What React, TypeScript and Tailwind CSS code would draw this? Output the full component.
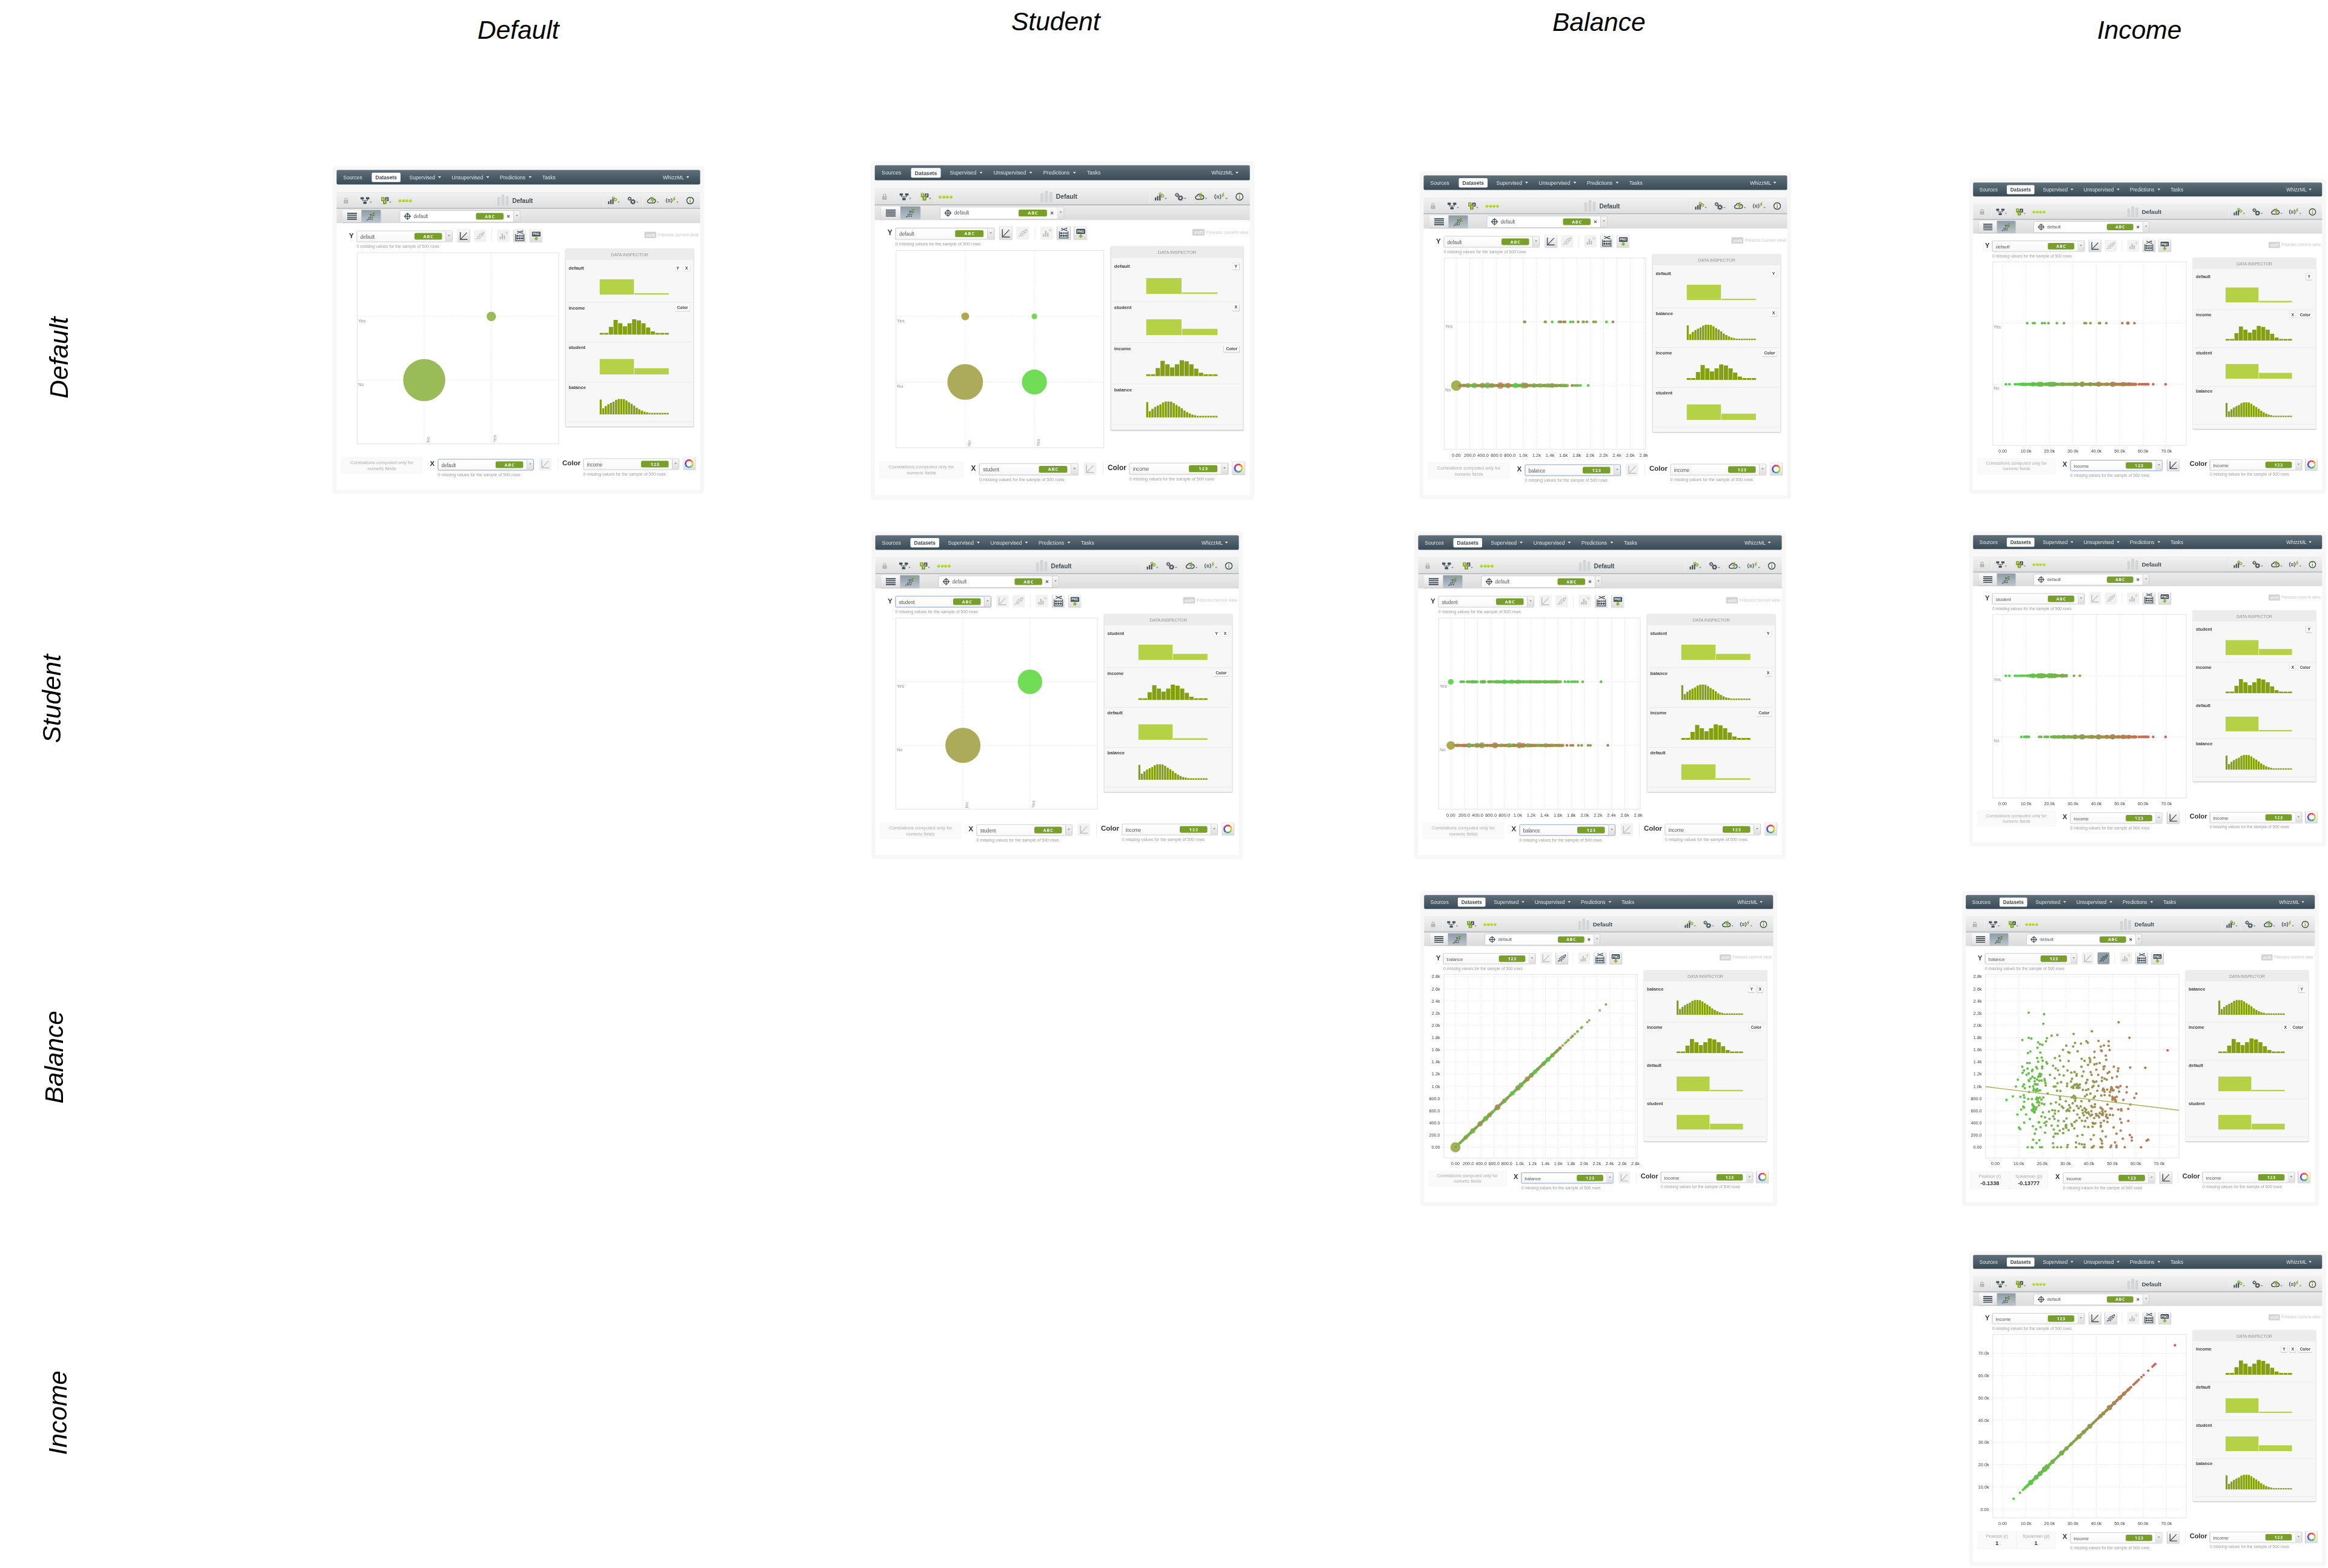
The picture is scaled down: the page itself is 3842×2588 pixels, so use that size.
import React from "react";

type Field = "default" | "student" | "balance" | "income";
type Dot = { x: number; y: number; r: number; c: string; o?: number };
type BtnState = "on" | "off" | "active";

/* ---------- helpers ---------- */

function rng(seed: number) {
  let s = seed;
  return () => {
    s = (s * 1664525 + 1013904223) % 4294967296;
    return s / 4294967296;
  };
}

function incomeColor(k: number) {
  const t = Math.max(0, Math.min(1, k / 73));
  const mix = (a: number, b: number) => Math.round(a + (b - a) * t);
  return `rgb(${mix(66, 226)},${mix(220, 88)},${mix(68, 86)})`;
}

const PLOT = { x: 68, y: 273, w: 665, h: 631 };
const YES = 483.6;
const NO = 693.6;
const incomeX = (k: number) => 101.6 + k * 8.05;
const balanceX = (v: number) => 107.7 + v * 0.221;
const balanceY = (v: number) => 867.3 - v * 0.2096;
const incomeY = (k: number) => 874.5 - k * 7.66;

const isNumeric = (f: Field) => f === "balance" || f === "income";

/* ---------- data ---------- */

function incomeRow(values: number[], y: number): Dot[] {
  return values.map((v) => ({ x: incomeX(v), y, r: 4.6, c: incomeColor(v) }));
}

function incomeDense(from: number, to: number, y: number, seed: number, bumps: number[][]): Dot[] {
  const rand = rng(seed);
  const out: Dot[] = [];
  for (let v = from; v <= to; v += 0.42) {
    out.push({ x: incomeX(v), y, r: 4.4 + rand() * 1.6, c: incomeColor(v) });
  }
  bumps.forEach(([v, r]) => out.push({ x: incomeX(v), y, r, c: incomeColor(v) }));
  return out;
}

function balanceDense(from: number, to: number, y: number, seed: number, inc: [number, number], bumps: number[][]): Dot[] {
  const rand = rng(seed);
  const out: Dot[] = [];
  for (let v = from; v <= to; v += 11) {
    out.push({ x: balanceX(v), y, r: 4 + rand() * 2, c: incomeColor(inc[0] + rand() * (inc[1] - inc[0])), o: 0.8 });
  }
  bumps.forEach(([v, r, k]) => out.push({ x: balanceX(v), y, r, c: incomeColor(k), o: 0.8 }));
  return out;
}

const balanceRow = (pairs: number[][], y: number): Dot[] =>
  pairs.map(([v, k]) => ({ x: balanceX(v), y, r: 4.5, c: incomeColor(k) }));

const LOW_TAIL = [1.4, 2.9, 5.3, 6.3];
const HIGH_TAIL = [58.2, 58.7, 59.4, 59.9, 60.4, 60.9, 61.3, 61.7, 62.2, 64.3, 69.6];

const dots: Record<string, Dot[]> = {
  dd: [
    { x: 289.3, y: NO, r: 69.5, c: "#99bb58" },
    { x: 510.6, y: YES, r: 15.5, c: "#99bb58" },
  ],
  ds: [
    { x: 289.3, y: YES, r: 12.5, c: "#b0a653" },
    { x: 510.6, y: YES, r: 9, c: "#70dc55" },
    { x: 289.3, y: NO, r: 57, c: "#abab5a" },
    { x: 510.6, y: NO, r: 40, c: "#71dc55" },
  ],
  ss: [
    { x: 510.6, y: YES, r: 40.5, c: "#71dc55" },
    { x: 289.3, y: NO, r: 58, c: "#abab5a" },
  ],
  db: [
    ...balanceRow([[1015, 15], [1026, 44], [1325, 20], [1335, 42], [1433, 8], [1532, 10], [1552, 62], [1562, 50], [1600, 35], [1625, 46], [1706, 10], [1745, 14], [1820, 52], [1892, 35], [1903, 22], [1950, 35], [2050, 40], [2082, 34], [2243, 10], [2340, 53]], YES),
    { x: 107.7, y: NO, r: 17.3, c: "#a1b254" },
    ...balanceDense(50, 1660, NO, 7, [2, 66], [[175, 8, 30], [270, 9, 22], [390, 9, 40], [465, 10, 18], [530, 8, 48], [660, 11, 52], [775, 9, 50], [885, 9, 6], [1000, 10, 24], [1040, 9, 42], [1160, 7.5, 32], [1260, 7, 12], [1370, 7, 22], [1430, 8, 36]]),
    ...balanceRow([[1730, 64], [1758, 10], [1790, 34], [1820, 14], [1855, 10], [1970, 12]], NO),
  ],
  di: [
    ...incomeRow([10.5, 13, 13.7, 16.9, 18, 19.6, 23.2, 26.2, 35, 35.6, 37.5, 41.2, 41.6, 44.3, 51.1, 56.3], YES),
    { x: incomeX(53.5), y: YES, r: 5.8, c: incomeColor(53.5) },
    ...incomeRow([...LOW_TAIL, 7.1, ...HIGH_TAIL], NO),
    ...incomeDense(7.6, 57, NO, 3, [[13, 7.4], [15.5, 8], [16.5, 8.4], [20, 8], [21, 8.4], [22, 8], [25.5, 6.8], [31, 7.4], [34, 9], [37.5, 7], [41, 8.6], [47, 8.8], [51.5, 7.4], [54, 6.6]]),
  ],
  sb: [
    { x: 107.7, y: YES, r: 9.2, c: "#5fdc4b" },
    ...balanceRow([[148, 8], [170, 12], [192, 10], [1706, 10], [1750, 9], [1760, 9], [1800, 14], [1830, 8], [1860, 14], [1892, 10], [1970, 14], [2243, 10]], YES),
    ...balanceDense(240, 400, YES, 21, [5, 24], []),
    ...balanceDense(450, 515, YES, 22, [5, 24], []),
    ...balanceDense(560, 1640, YES, 23, [3, 26], [[800, 7.5, 8], [900, 6.5, 6], [1000, 6.8, 15], [1090, 6, 5]]),
    { x: 107.7, y: NO, r: 14.2, c: "#b0a850" },
    ...balanceDense(60, 1680, NO, 24, [14, 68], [[270, 8, 28], [390, 8, 45], [465, 10, 36], [660, 10, 52], [875, 7.5, 26], [1025, 10, 42], [1080, 8, 56], [1150, 7, 26], [1420, 7, 36]]),
    ...balanceRow([[1735, 56], [1790, 40], [1822, 60], [1905, 36], [1955, 40], [2050, 40], [2085, 36], [2345, 53]], NO),
  ],
  si: [
    ...incomeRow([...LOW_TAIL, 7.3, 8, 8.6, 9.3, 30.5, 33], YES),
    ...incomeDense(10.4, 27.3, YES, 31, [[12, 6.4], [13, 8], [15.5, 8.6], [16.5, 9], [17.5, 8], [20, 8.4], [21, 8.6], [22.3, 8], [25.5, 7]]),
    ...incomeRow([8, 9.3, 10, 10.5, 11.2, 15.6, 16.5, 18, 18.8, 19.4, ...HIGH_TAIL], NO),
    ...incomeDense(20.8, 57, NO, 32, [[26.2, 7], [31, 8], [34, 9.2], [38, 7], [41, 8.8], [44.5, 7], [47, 9], [51.5, 7.6], [54, 7]]),
  ],
};

const bbDots: Dot[] = (() => {
  const rand = rng(11);
  const out: Dot[] = [{ x: balanceX(0), y: balanceY(0), r: 17.4, c: "#a1b254" }];
  const push = (v: number, r: number, k: number) => out.push({ x: balanceX(v), y: balanceY(v), r, c: incomeColor(k), o: 0.85 });
  push(5, 3.6, 60);
  push(40, 3.6, 14);
  for (let v = 60; v <= 1630; v += 9) push(v, 4 + rand() * 1.6, 4 + rand() * 48);
  [[160, 7.5, 36], [270, 9, 26], [385, 9, 44], [470, 9, 24], [530, 8, 40], [655, 10, 46], [760, 8, 26], [885, 8, 14], [975, 9.5, 34], [1020, 8.5, 20], [1120, 8.5, 40], [1180, 8, 40], [1240, 7.5, 8], [1370, 7, 26], [1440, 8, 12], [1510, 7, 26], [1630, 6, 44]].forEach(([v, r, k]) => push(v, r, k));
  [[1670, 54], [1705, 10], [1725, 50], [1750, 10], [1760, 30], [1795, 30], [1815, 40], [1825, 44], [1858, 14], [1895, 16], [1903, 26], [1955, 36], [1970, 20], [2052, 40], [2082, 34], [2245, 10], [2342, 53]].forEach(([v, k]) => push(v, 4.4, k));
  return out;
})();

const iiDots: Dot[] = (() => {
  const rand = rng(5);
  const out: Dot[] = [];
  const push = (k: number, r: number) => out.push({ x: incomeX(k), y: incomeY(k), r, c: incomeColor(k) });
  for (let k = 9.3; k <= 55; k += 0.3) push(k, 3.9 + rand() * 1.5);
  [[12, 9], [14.3, 8], [16, 8], [18, 9.5], [19, 9], [21.3, 7.5], [25.2, 8.5], [27.3, 7], [32.6, 8], [34.6, 7], [37.2, 8.5], [41.8, 6.8], [43, 6.5], [45.6, 9], [47.6, 7], [50, 7], [51.8, 6.6]].forEach(([k, r]) => push(k, r));
  [4.7, 7.4, 8.7, 55.9, 56.3, 56.8, 57.2, 57.7, 58.2, 59.3, 60.2, 62.2, 64, 64.6, 65.2, 73.6].forEach((k) => push(k, 4.4));
  return out;
})();

/* Balance against income, as [income (thousands), balance] pairs. */
const SCATTER: number[][] = (() => {
  const traced = [
    301,613,366,620,363,666,681,659,568,702,491,715,422,720,398,723,301,733,312,737,274,744,378,735,374,750,341,755,349,764,359,767,338,781,727,733,
    888,793,596,748,639,750,545,750,551,757,522,761,497,758,460,771,489,775,619,770,606,775,639,772,298,806,308,799,350,804,446,791,468,802,474,805,508,798,579,800,607,794,610,797,643,792,
    627,819,431,821,412,830,337,830,356,828,341,848,360,843,376,850,379,857,295,854,305,854,434,842,470,845,525,834,537,844,558,830,561,840,579,828,629,839,552,863,561,850,579,861,588,858,601,854,
    274,872,281,890,275,901,296,881,317,886,333,873,337,881,358,871,358,879,301,904,292,911,315,893,348,905,350,914,342,920,404,867,415,880,425,889,448,871,465,890,481,900,495,897,504,907,524,872,533,895,563,898,587,886,618,872,622,870,618,884,661,872,680,880,678,893,730,876,794,877,642,897,635,903,674,919,611,924,595,911,567,911,503,915,527,917,449,914,431,910,391,911,
    255,934,301,937,309,929,326,927,317,920,336,933,345,939,355,938,368,931,369,939,411,927,484,930,480,943,549,935,610,940,622,929,631,934,654,925,423,951,438,946,464,953,495,958,517,957,545,947,573,941,578,946,587,943,543,951,
    247,967,276,966,281,957,285,975,305,968,320,966,327,955,338,957,372,950,373,962,407,967,415,967,349,985,333,983,321,986,303,993,421,987,435,988,463,965,483,970,489,966,504,973,512,960,516,972,530,983,544,984,553,980,562,1001,575,964,570,970,596,964,591,987,616,977,633,982,651,970,654,977,660,985,645,993,672,969,689,965,680,972,716,969,715,995,683,991,756,1001,748,1021,701,1031,731,1053,722,1074,
    207,1031,234,1014,266,1016,280,1008,283,1020,282,1040,299,1027,315,1027,336,1020,348,1020,363,1019,381,1000,433,1015,434,1028,395,1049,367,1052,357,1048,344,1057,317,1052,322,1060,278,1063,281,1068,269,1077,253,1101,290,1101,340,1036,355,1030,416,1043,431,1053,442,1063,447,1070,458,1037,483,1019,492,1011,499,1025,497,1036,487,1047,524,1037,539,1014,547,1006,557,1036,576,1022,581,1014,608,1010,622,1008,655,1016,673,1016,667,1030,669,1040,655,1031,643,1010,
    306,1123,282,1140,260,1164,265,1171,319,1157,345,1138,343,1139,332,1172,327,1193,351,1162,374,1153,355,1110,370,1115,389,1122,405,1110,410,1122,426,1131,376,1135,368,1141,398,1154,424,1155,450,1133,461,1120,458,1153,458,1160,470,1176,482,1147,485,1155,495,1137,503,1130,494,1168,447,1170,432,1178,407,1173,413,1193,423,1193,447,1190,370,1188,320,1222,346,1224,334,1238,406,1208,404,1239,466,1247,507,1204,528,1199,501,1235,515,1241,526,1244,537,1245,576,1200,564,1220,613,1181,605,1219,610,1227,627,1207,611,1240,
    537,1159,553,1161,571,1160,573,1144,583,1143,606,1141,606,1160,619,1131,634,1137,635,1118,628,1109,614,1104,599,1114,587,1106,578,1118,569,1102,548,1117,540,1132,526,1131,516,1117,507,1101,530,1094,553,1091,566,1085,601,1094,625,1086,652,1073,644,1103,657,1104,660,1163,688,1123,693,1140,690,1178,722,1132,672,1193,729,1199,737,1211,737,1226,699,1217,666,1235,672,1250,800,1226,806,1222,
    297,1258,314,1258,317,1259,349,1258,357,1258,406,1258,422,1258,438,1258,464,1258,501,1258,534,1258,537,1258,568,1259,572,1258,576,1252,604,1258,609,1258,612,1258,647,1258,672,1258,707,1258,776,1258,650,1250,
    680,1077,692,1075,693,1082,669,1038,634,1053,605,1068,609,1072,614,1077,581,1052,570,1066,544,1078,537,1071,521,1062,512,1071,492,1082,476,1068,469,1082,462,1082,401,1080,412,1082,427,1085,412,1097,387,1087,361,1091,326,1082,331,1076,321,1072,317,1083,323,1090,472,1056,
    318,1058,324,1066,318,1077,334,1066,346,1044,341,1024,333,1028,337,1043,314,1080,326,1091,303,941,326,942,333,957,350,918,346,911,354,909,337,978,341,988,331,989,323,978,
    498,960,508,965,504,955,490,974,511,974,497,1016,493,1022,488,1018,505,1060,540,1087,534,1105,546,1093,528,1080,556,1098,562,1107,586,1098,594,1106,609,1100,615,1095,612,1086,632,1116,566,1060,580,1065,630,1101,461,1084,473,1084,467,1077,572,1141,578,1145,460,1151,460,1165,606,1155,
    650,975,649,983,655,985,665,1020,660,1026,668,1034,656,1024,678,970,619,983,622,992,614,985,647,1072,
  ];
  const out: number[][] = [];
  for (let i = 0; i < traced.length; i += 2) {
    out.push([(traced[i] - 160) / 9.9, ((1258 - traced[i + 1]) / 58.45) * 200]);
  }
  return out;
})();

const biDots: Dot[] = SCATTER.map(([k, v]) => ({ x: incomeX(k), y: balanceY(v), r: 4.3, c: incomeColor(k) }));
dots.bb = bbDots;
dots.ii = iiDots;
dots.bi = biDots;

/* ---------- small pieces ---------- */

function Caret({ className = "" }: { className?: string }) {
  return (
    <svg viewBox="0 0 10 6" className={className}>
      <path d="M0 0h10L5 6z" fill="currentColor" />
    </svg>
  );
}

function Badge({ numeric }: { numeric: boolean }) {
  return (
    <div className="flex h-[22px] w-[91px] shrink-0 items-center justify-center rounded-[5px] bg-[#77a02b] pl-[2px] font-['Open_Sans',sans-serif] text-[14px] leading-none font-bold tracking-[2px] text-white">
      {numeric ? "123" : "ABC"}
    </div>
  );
}

function FieldSelect({ field, focused = false }: { field: Field; focused?: boolean }) {
  return (
    <div
      className={
        "flex h-[38px] w-[317px] items-center rounded-[4px] border-2 bg-gradient-to-b from-white to-[#f8f8f8] shadow-[0_1px_2px_rgba(0,0,0,0.12)] " +
        (focused ? "border-[#86a3dc]" : "border-[#cfcfcf]")
      }
    >
      <span className="flex-1 pt-[3px] pl-[10px] text-[16.5px] leading-none tracking-[-0.3px] text-[#5c5c5c]">{field}</span>
      <Badge numeric={isNumeric(field)} />
      <div className="ml-[11px] flex h-full w-[22px] items-center justify-center rounded-r-[3px] border-l-2 border-[#cfcfcf] bg-gradient-to-b from-[#f7f7f7] to-[#dedede]">
        <Caret className="mb-1 h-[6px] w-[8px] text-[#888]" />
      </div>
    </div>
  );
}

function ToolButton({ state, children }: { state: BtnState; children: React.ReactNode }) {
  const look =
    state === "active"
      ? "border-[#8b959c] bg-[#94a0a8]"
      : state === "off"
        ? "border-[#ececec] bg-[#f1f1f1] opacity-90"
        : "border-[#dcdcdc] bg-gradient-to-b from-[#fafafa] to-[#dcdcdc] shadow-[0_1px_2px_rgba(0,0,0,0.3)]";
  return (
    <div className={"flex h-[41px] w-[41px] shrink-0 items-center justify-center rounded-[4px] border " + look}>
      <div className={"h-full w-full " + (state === "off" ? "opacity-35 grayscale-[40%]" : "")}>{children}</div>
    </div>
  );
}

function LineIcon() {
  return (
    <svg viewBox="0 0 40 40" className="h-full w-full" fill="none" stroke="#3e4c55">
      <path d="M8.5 7v25.5H33" strokeWidth="3" />
      <path d="M11 30L31 9" strokeWidth="2.6" />
    </svg>
  );
}

function ScatterIcon() {
  const p = [[8, 30], [13, 28], [12, 22], [19, 29], [18, 23], [17, 17], [24, 23], [26, 17], [21, 14], [30, 18], [27, 11], [33, 12], [32, 8]];
  return (
    <svg viewBox="0 0 40 40" className="h-full w-full">
      {p.map(([x, y], i) => (
        <circle key={i} cx={x} cy={y} r="2.1" fill="#3e4c55" />
      ))}
      <path d="M11 29L31 10" stroke="#3e4c55" strokeWidth="1.4" />
    </svg>
  );
}

function BarsPlusIcon() {
  return (
    <svg viewBox="0 0 40 40" className="h-full w-full">
      <g fill="#3e4c55">
        <rect x="7" y="22" width="4.5" height="10" rx="2" />
        <rect x="14" y="12" width="4.5" height="20" rx="2" />
        <rect x="21" y="18" width="4.5" height="14" rx="2" />
      </g>
      <path d="M31 5v11M25.500 10.500h11" stroke="#9bbf2f" strokeWidth="3.6" />
    </svg>
  );
}

function AbacusIcon() {
  return (
    <svg viewBox="0 0 40 40" className="h-full w-full" fill="none" stroke="#3e4c55">
      <path d="M11 4c8 0 9 7 18 7M11 11c8 0 9-7 18-7" strokeWidth="2.400" />
      <path d="M28 1.500l5 2.500-5 2.500zM28 8.500l5 2.500-5 2.500z" fill="#3e4c55" stroke="none" />
      <path d="M6 14v22h28V14" strokeWidth="2.600" />
      <path d="M6 20h28M6 28h28" strokeWidth="1.500" />
      <g fill="#3e4c55" stroke="none">
        <circle cx="12" cy="20" r="3.200" />
        <circle cx="12" cy="28.500" r="3.200" />
        <circle cx="20" cy="28.500" r="3.200" />
        <circle cx="28" cy="28.500" r="3.200" />
      </g>
      <circle cx="20" cy="20" r="2.600" strokeWidth="1.600" />
      <circle cx="28" cy="20" r="2.600" strokeWidth="1.600" />
    </svg>
  );
}

function PngIcon() {
  return (
    <svg viewBox="0 0 40 40" className="h-full w-full">
      <rect x="6" y="6" width="29" height="16" rx="2" fill="#3e4c55" />
      <text x="20.500" y="18" textAnchor="middle" fontSize="11" fontWeight="700" fill="#fff" fontFamily="Liberation Sans, sans-serif">
        PNG
      </text>
      <path d="M17.500 23h6v5h5l-8 8-8-8h5z" fill="#8ab52a" />
    </svg>
  );
}

function Wheel() {
  const colors = ["#e8452c", "#f08c1e", "#f2c51c", "#9ccb3b", "#3fae6a", "#2f9fd0", "#3b5fc0", "#6a3fae", "#a93a96", "#d93672"];
  const pt = (a: number) => [20 + 12 * Math.sin(a), 20 - 12 * Math.cos(a)];
  return (
    <svg viewBox="0 0 40 40" className="h-full w-full">
      <circle cx="20" cy="20" r="15" fill="#fff" />
      {colors.map((c, i) => {
        const a = pt((i / 10) * Math.PI * 2);
        const b = pt(((i + 1) / 10) * Math.PI * 2);
        return <path key={c} d={`M${a[0]} ${a[1]}A12 12 0 0 1 ${b[0]} ${b[1]}`} fill="none" stroke={c} strokeWidth="5.5" />;
      })}
    </svg>
  );
}

/* ---------- header icons ---------- */

function LockIcon() {
  return (
    <svg viewBox="0 0 16 20" className="h-[20px] w-[16px]">
      <path d="M4 9V5.500a4 4 0 0 1 8 0V9" fill="none" stroke="#b3b3b3" strokeWidth="2.400" />
      <rect x="1" y="8.500" width="14" height="11" rx="1" fill="#b3b3b3" />
      <rect x="7" y="12" width="2" height="4" fill="#e6e6e6" />
    </svg>
  );
}

function FlowIcon() {
  return (
    <svg viewBox="0 0 30 24" className="h-[24px] w-[30px]">
      <g fill="#44515a">
        <rect x="0" y="1" width="11" height="7" rx="1" />
        <rect x="18" y="1" width="11" height="7" rx="1" />
        <rect x="9" y="16" width="11" height="7" rx="1" />
      </g>
      <path d="M6 8v4h17V8M14.500 12v4" fill="none" stroke="#44515a" strokeWidth="2" />
    </svg>
  );
}

function BlocksIcon() {
  return (
    <svg viewBox="0 0 26 26" className="h-[26px] w-[26px]">
      <rect x="0" y="1" width="11" height="14" rx="2" fill="#8aa82c" />
      <rect x="13" y="2" width="12" height="13" rx="2" fill="#44515a" />
      <rect x="6" y="10" width="12" height="15" rx="2" fill="#7f9f28" />
      <g fontFamily="Liberation Sans, sans-serif" fontSize="9" fontWeight="700" fill="#fff">
        <text x="3" y="10">1</text>
        <text x="16.500" y="12">0</text>
        <text x="9.500" y="21">1</text>
      </g>
    </svg>
  );
}

function Gear({ cx, cy, r, color }: { cx: number; cy: number; r: number; color: string }) {
  return (
    <g stroke={color} fill="none">
      <circle cx={cx} cy={cy} r={r * 0.62} strokeWidth={r * 0.42} />
      <circle cx={cx} cy={cy} r={r * 0.92} strokeWidth={r * 0.26} strokeDasharray={`${r * 0.36} ${r * 0.3625}`} />
    </g>
  );
}

function ModelIcon() {
  return (
    <svg viewBox="0 0 32 30" className="h-[30px] w-[32px]">
      <g fill="#44515a">
        <rect x="1" y="17" width="4.500" height="10" rx="1.500" />
        <rect x="8" y="12" width="4.500" height="15" rx="1.500" />
        <rect x="15" y="8" width="4.500" height="19" rx="1.500" />
      </g>
      <Gear cx={18} cy={6} r={5} color="#84a82c" />
      <Gear cx={25} cy={12} r={6} color="#84a82c" />
    </svg>
  );
}

function GearsIcon() {
  return (
    <svg viewBox="0 0 30 28" className="h-[28px] w-[30px]">
      <Gear cx={8} cy={8} r={6.5} color="#44515a" />
      <Gear cx={19} cy={18} r={8.5} color="#44515a" />
    </svg>
  );
}

function CloudIcon() {
  return (
    <svg viewBox="0 0 32 26" className="h-[26px] w-[32px]">
      <path d="M8 21a5.500 5.500 0 0 1-.5-11C9 4 17 2 21 8c5-.5 8 3 7.500 7S25 21 22 21z" fill="none" stroke="#44515a" strokeWidth="3.200" />
      <path d="M19 0l-8 13h6l-3 12 11-14h-7l5-11z" fill="#8db52a" />
    </svg>
  );
}

function ScriptIcon() {
  return (
    <svg viewBox="0 0 36 26" className="h-[26px] w-[36px]">
      <g fill="none" stroke="#44515a" strokeWidth="2.400">
        <path d="M6 5c-4 5-4 11 0 16M19 5c4 5 4 11 0 16" />
        <path d="M8 10h9M8 13.500h9M8 17h9" strokeWidth="1.800" />
      </g>
      <path d="M30 0l-6 9h4l-2 8 8-10h-4l3-7z" fill="#8db52a" />
    </svg>
  );
}

function InfoIcon() {
  return (
    <svg viewBox="0 0 26 26" className="h-[26px] w-[26px]">
      <circle cx="13" cy="13" r="11" fill="#f2f2f2" stroke="#3e4c55" strokeWidth="3" />
      <path d="M13 5.500v3.500M13 11v9" stroke="#84a82c" strokeWidth="3.600" />
    </svg>
  );
}

function Divider({ className = "" }: { className?: string }) {
  return <div className={"h-[34px] w-[2px] shrink-0 border-l border-[#d2d2d2] bg-white " + className} />;
}

function IconMenu({ width, children }: { width: string; children: React.ReactNode }) {
  return (
    <div className={"flex items-center " + width}>
      {children}
      <Caret className="mt-3 h-[5px] w-[8px] text-[#7c858b]" />
    </div>
  );
}

/* ---------- panel sections ---------- */

function NavItem({ label, width, menu = true }: { label: string; width: string; menu?: boolean }) {
  return (
    <div className={"flex shrink-0 items-center justify-between " + width}>
      <span>{label}</span>
      {menu && <Caret className="h-[6px] w-[10px] text-[#e6eaec]" />}
    </div>
  );
}

function NavBar() {
  return (
    <div className="flex h-[48px] items-center rounded-[5px] bg-gradient-to-b from-[#60707a] to-[#384b57] pl-[22px] text-[17px] leading-none text-[#dfe4e7]">
      <NavItem label="Sources" width="w-[65px]" menu={false} />
      <div className="ml-[29px] flex h-[31px] w-[95px] items-center justify-center rounded-[4px] bg-white pt-[2px] text-[17px] font-bold text-[#3c464c]">
        Datasets
      </div>
      <div className="ml-[29px] flex gap-[35px]">
        <NavItem label="Supervised" width="w-[105px]" />
        <NavItem label="Unsupervised" width="w-[124px]" />
        <NavItem label="Predictions" width="w-[105px]" />
        <NavItem label="Tasks" width="w-[45px]" menu={false} />
      </div>
      <div className="mr-[36px] ml-auto">
        <NavItem label="WhizzML" width="w-[87px]" />
      </div>
    </div>
  );
}

function HeaderBar() {
  return (
    <div className="mt-[26px] flex h-[54px] items-center border-t border-b-2 border-t-[#dcdcdc] border-b-[#6f7a81] bg-gradient-to-b from-[#f1f1f1] to-[#dfdfdf]">
      <div className="flex w-[530px] items-center pl-[23px]">
        <LockIcon />
        <Divider className="ml-[22px]" />
        <div className="ml-[16px]">
          <IconMenu width="w-[41px]"><FlowIcon /></IconMenu>
        </div>
        <Divider className="ml-[7px]" />
        <div className="ml-[18px]">
          <IconMenu width="w-[38px]"><BlocksIcon /></IconMenu>
        </div>
        <Divider className="ml-[6px]" />
        <div className="ml-[11px] flex gap-[1.5px]">
          {[0, 1, 2, 3].map((i) => (
            <div key={i} className="h-[10px] w-[10px] rounded-full bg-gradient-to-b from-[#d6f04a] to-[#8cc80c]" />
          ))}
        </div>
      </div>
      <svg viewBox="0 0 40 40" className="h-[40px] w-[40px]" fill="#d3d5d6">
        <rect x="0" y="8" width="10" height="31" rx="4" />
        <rect x="14" y="0" width="10" height="39" rx="4" />
        <rect x="28" y="5" width="10" height="34" rx="4" />
      </svg>
      <span className="pl-[10px] text-[20px] leading-none font-bold text-[#3d4a52]">Default</span>
      <div className="ml-auto flex items-center pr-[20px]">
        <Divider />
        <div className="ml-[15px]"><IconMenu width="w-[41px]"><ModelIcon /></IconMenu></div>
        <Divider className="ml-[7px]" />
        <div className="ml-[14px]"><IconMenu width="w-[42px]"><GearsIcon /></IconMenu></div>
        <Divider className="ml-[7px]" />
        <div className="ml-[14px]"><IconMenu width="w-[41px]"><CloudIcon /></IconMenu></div>
        <Divider className="ml-[6px]" />
        <div className="ml-[12px]"><IconMenu width="w-[45px]"><ScriptIcon /></IconMenu></div>
        <Divider className="ml-[7px]" />
        <div className="ml-[15px]"><InfoIcon /></div>
      </div>
    </div>
  );
}

function ViewBar() {
  return (
    <div className="flex h-[48px] items-center bg-gradient-to-b from-[#ebebeb] to-[#dcdcdc] pt-[1px] pl-[20px]">
      <div className="flex h-[41px] shadow-[0_1px_2px_rgba(0,0,0,0.2)]">
        <div className="flex w-[62px] items-center justify-center rounded-l-[3px] bg-gradient-to-b from-[#fbfbfb] to-[#dedede]">
          <svg viewBox="0 0 32 24" className="h-[24px] w-[32px]" stroke="#3e4c55" strokeWidth="3.600">
            <path d="M0 2.500h32M0 8.800h32M0 15.200h32M0 21.500h32" />
          </svg>
        </div>
        <div className="flex w-[64px] items-center justify-center rounded-r-[3px] bg-gradient-to-b from-[#8e9ba5] to-[#bac4cb]">
          <svg viewBox="0 0 32 30" className="h-[30px] w-[32px]">
            <g fill="#44515a">
              {[[3, 27], [8, 25], [9, 20], [13, 25], [14, 19], [15, 14], [19, 25], [20, 19], [19, 10], [24, 13], [14, 9], [25, 5]].map(([x, y], i) => (
                <circle key={i} cx={x} cy={y} r="2" />
              ))}
            </g>
            <path d="M15 16L30 3M20 3l9 10" stroke="#84a82c" strokeWidth="2.400" />
          </svg>
        </div>
      </div>
      <div className="ml-[62px] flex h-[40px] w-[398px] items-center rounded-[4px] border-2 border-[#cbcbcb] bg-white">
        <svg viewBox="0 0 24 24" className="ml-[12px] h-[24px] w-[24px]" fill="none" stroke="#3e4c55" strokeWidth="2.600">
          <circle cx="12" cy="12" r="8" />
          <path d="M12 0v24M0 12h24" />
        </svg>
        <span className="flex-1 pl-[8px] text-[16.5px] leading-none tracking-[-0.3px] text-[#5c5c5c]">default</span>
        <Badge numeric={false} />
        <svg viewBox="0 0 10 10" className="ml-[11px] h-[10px] w-[10px]" stroke="#666" strokeWidth="2.800">
          <path d="M1 1l8 8M9 1L1 9" />
        </svg>
        <div className="ml-[11px] flex h-full w-[21px] items-center justify-center rounded-r-[3px] border-l-2 border-[#cfcfcf] bg-gradient-to-b from-[#f7f7f7] to-[#dedede]">
          <Caret className="mb-1 h-[6px] w-[8px] text-[#888]" />
        </div>
      </div>
    </div>
  );
}

function MissingNote() {
  return (
    <div className="mt-[4px] text-[14.5px] leading-[20px] tracking-[-0.22px] whitespace-nowrap text-[#a0a0a0]">
      0 missing values for the sample of 500 rows
    </div>
  );
}

function Toolbar({ spec }: { spec: PanelSpec }) {
  return (
    <div className="flex h-[82px] items-start pt-[21px] pl-[41px]">
      <span className="w-[25px] pt-[6px] text-[23px] leading-[26px] font-bold text-[#333]">Y</span>
      <div className="w-[317px] pt-[3px]">
        <FieldSelect field={spec.y} focused={spec.yFocus} />
        <MissingNote />
      </div>
      <div className="ml-[16px] flex items-center gap-[13px]">
        <ToolButton state={spec.yLine}><LineIcon /></ToolButton>
        <ToolButton state={spec.yScatter}><ScatterIcon /></ToolButton>
        <div className="mx-[4px] h-[41px] w-[2px] bg-[#ececec]" />
        <ToolButton state="off"><BarsPlusIcon /></ToolButton>
        <ToolButton state="on"><AbacusIcon /></ToolButton>
        <ToolButton state="on"><PngIcon /></ToolButton>
      </div>
      <div className="mr-[5px] ml-auto flex items-center pt-[7px]">
        <div className="flex h-[21px] w-[39px] items-center justify-center rounded-[2px] bg-[#d3d3d3] text-[14px] leading-none font-bold text-[#f3f3f3]">shift</div>
        <span className="ml-[5px] text-[14.500px] leading-none text-[#cacaca]">Freezes current view</span>
      </div>
    </div>
  );
}

type Tick = { at: number; label: string };

const balanceTicks = Array.from({ length: 15 }, (_, i) => ({
  v: i * 200,
  label: i === 0 ? "0.00" : i < 5 ? `${i * 200}.0` : `${(i * 0.2).toFixed(1)}k`,
}));
const incomeTicks = Array.from({ length: 8 }, (_, i) => ({ v: i * 10, label: i === 0 ? "0.00" : `${i * 10}.0k` }));

function Plot({ spec }: { spec: PanelSpec }) {
  const xs: Tick[] =
    spec.x === "balance"
      ? balanceTicks.map((t) => ({ at: balanceX(t.v), label: t.label }))
      : spec.x === "income"
        ? incomeTicks.map((t) => ({ at: incomeX(t.v), label: t.label }))
        : [{ at: 289.3, label: "No" }, { at: 510.6, label: "Yes" }];
  const ys: Tick[] =
    spec.y === "balance"
      ? balanceTicks.map((t) => ({ at: balanceY(t.v), label: t.label }))
      : spec.y === "income"
        ? incomeTicks.map((t) => ({ at: incomeY(t.v), label: t.label }))
        : [{ at: NO, label: "No" }, { at: YES, label: "Yes" }];
  const marks = dots[spec.y[0] + spec.x[0]];
  const right = PLOT.x + PLOT.w;
  const bottom = PLOT.y + PLOT.h;
  return (
    <svg viewBox="0 258 756 689" className="h-[689px] w-[756px] shrink-0" fontFamily="Liberation Sans, sans-serif">
      <rect x={PLOT.x} y={PLOT.y} width={PLOT.w} height={PLOT.h} fill="#fff" stroke="#e4e4e4" strokeWidth="2.200" />
      <g stroke="#dedede" strokeWidth="1.500" strokeDasharray="4 4">
        {xs.map((t) => (
          <line key={t.label} x1={t.at} x2={t.at} y1={PLOT.y} y2={bottom} />
        ))}
        {ys.map((t) => (
          <line key={t.label} x1={PLOT.x} x2={right} y1={t.at} y2={t.at} />
        ))}
      </g>
      {marks.map((d, i) => (
        <circle key={i} cx={d.x} cy={d.y} r={d.r} fill={d.c} fillOpacity={d.o ?? 1} />
      ))}
      {spec.trend && <line x1={PLOT.x} y1="659" x2={right} y2="740" stroke="#a0b34c" strokeWidth="3" />}
      {isNumeric(spec.x)
        ? xs.map((t) => (
            <text key={t.label} x={t.at} y="929" textAnchor="middle" fontSize="15.2" fill="#3f3f3f">
              {t.label}
            </text>
          ))
        : xs.map((t) => (
            <text key={t.label} transform={`translate(${t.at + 17} 900) rotate(-90)`} fontSize="15" fill="#929292">
              {t.label}
            </text>
          ))}
      {isNumeric(spec.y)
        ? ys.map((t) => (
            <text key={t.label} x="55" y={t.at + 5.5} textAnchor="end" fontSize="15.2" fill="#3f3f3f">
              {t.label}
            </text>
          ))
        : ys.map((t) => (
            <text key={t.label} x="71" y={t.at + 18.5} fontSize="15" fill="#929292">
              {t.label}
            </text>
          ))}
    </svg>
  );
}

const HIST: Record<Field, { values: number[]; color: string; gap: number }> = {
  default: { values: [51, 5], color: "#b5d247", gap: 1.5 },
  student: { values: [51, 20.5], color: "#b5d247", gap: 1.5 },
  income: { values: [6, 6, 26, 49, 38, 28, 38, 51, 47.5, 38, 24, 11, 6, 6, 6], color: "#84a010", gap: 1.4 },
  balance: {
    values: [49, 20, 27.5, 33.5, 38, 42, 48, 51, 51, 50.5, 46, 40, 35, 29, 22, 17, 12.5, 9, 7, 5, 5, 5, 5, 5, 5, 5, 5],
    color: "#84a010",
    gap: 1.6,
  },
};

function Histogram({ field }: { field: Field }) {
  const h = HIST[field];
  const step = 230 / h.values.length;
  return (
    <svg viewBox="0 0 230 52" className="ml-[103px] h-[52px] w-[230px]">
      {h.values.map((v, i) => (
        <rect key={i} x={i * step} y={52 - v} width={step - h.gap} height={v} fill={h.color} />
      ))}
    </svg>
  );
}

function Inspector({ rows }: { rows: InspectorRow[] }) {
  return (
    <div className="mt-[1px] h-[588px] w-[422px] rounded-[3px] bg-[#f7f7f7] shadow-[0_2px_4px_rgba(0,0,0,0.25)]">
      <div className="flex h-[38px] items-center justify-center bg-[#ececec] pt-[1px] text-[15px] leading-none tracking-[-0.4px] text-[#959595]">
        DATA INSPECTOR
      </div>
      <div className="px-[5px] pt-[9px]">
        {rows.map(([field, tags]) => (
          <div key={field} className="h-[131.500px] border-b-2 border-[#eaeaea] px-[5px] pt-[5px]">
            <div className="flex h-[24px] items-center justify-between">
              <span className="text-[15.500px] leading-none font-bold tracking-[-0.1px] text-[#444]">{field}</span>
              <div className="flex gap-[8px] pr-[2px]">
                {tags.map((t) => (
                  <span key={t} className="rounded-[3px] bg-white px-[6px] py-[3px] text-[14px] leading-[15px] font-bold text-[#444] shadow-[0_1px_2px_rgba(0,0,0,0.16)]">
                    {t}
                  </span>
                ))}
              </div>
            </div>
            <div className="mt-[25px] -ml-[1px]">
              <Histogram field={field} />
            </div>
          </div>
        ))}
      </div>
    </div>
  );
}

function Correlation({ stats }: { stats?: [string, string] }) {
  if (!stats) {
    return (
      <div className="mt-[1px] flex h-[53px] w-[268px] items-center justify-center rounded-[2px] border border-[#f1f1f1] bg-[#fafafa] text-center text-[15.300px] leading-[20px] text-[#adadad]">
        Correlations computed only for
        <br />
        numeric fields
      </div>
    );
  }
  return (
    <div className="mt-[2px] flex h-[62px] w-[268px] items-center rounded-[2px] border border-[#f1f1f1] bg-[#fafafa] text-center">
      {[["Pearson (r)", stats[0]], ["Spearman (ρ)", stats[1]]].map(([name, value], i) => (
        <div key={name} className={"flex h-full w-1/2 flex-col justify-center " + (i === 1 ? "border-l-2 border-[#f0f0f0]" : "")}>
          <span className="text-[15px] leading-[24px] text-[#a9a9a9]">{name}</span>
          <span className="text-[19px] leading-[26px] font-bold text-[#333]">{value}</span>
        </div>
      ))}
    </div>
  );
}

function Footer({ spec }: { spec: PanelSpec }) {
  return (
    <div className="flex h-[109px] items-start pl-[15px]">
      <Correlation stats={spec.stats} />
      <span className="ml-[25px] w-[26px] pt-[9px] text-[23px] leading-[26px] font-bold text-[#333]">X</span>
      <div className="w-[317px] pt-[7px]">
        <FieldSelect field={spec.x} focused={spec.xFocus} />
        <MissingNote />
      </div>
      <div className="ml-[17px] pt-[4px]">
        <ToolButton state={spec.xLine}><LineIcon /></ToolButton>
      </div>
      <div className="mt-[4px] ml-[20px] h-[41px] w-[2px] bg-[#ececec]" />
      <span className="ml-[14px] w-[69px] pt-[7px] text-[23px] leading-[26px] font-bold text-[#333]">Color</span>
      <div className="w-[317px] pt-[5px]">
        <FieldSelect field="income" />
        <div className="-mt-[1px]"><MissingNote /></div>
      </div>
      <div className="ml-[12px] pt-[2px]">
        <ToolButton state="on"><Wheel /></ToolButton>
      </div>
    </div>
  );
}

/* ---------- panels ---------- */

type InspectorRow = [Field, string[]];
type PanelSpec = {
  y: Field;
  x: Field;
  place: string;
  scale: string;
  yFocus?: boolean;
  xFocus?: boolean;
  yLine: BtnState;
  yScatter: BtnState;
  xLine: BtnState;
  rows: InspectorRow[];
  stats?: [string, string];
  trend?: boolean;
};

const S600 = "scale-[0.5]";
const S619 = "scale-[0.5158]";
const S576 = "scale-[0.48]";

const PANELS: (PanelSpec | null)[][] = [
  [
    { y: "default", x: "default", place: "pl-[9px] pt-[13.5px]", scale: S600, xFocus: true, yLine: "on", yScatter: "off", xLine: "off", rows: [["default", ["Y", "X"]], ["income", ["Color"]], ["student", []], ["balance", []]] },
    { y: "default", x: "student", place: "pl-[7.3px] pt-[6.4px]", scale: S619, yLine: "on", yScatter: "off", xLine: "off", rows: [["default", ["Y"]], ["student", ["X"]], ["income", ["Color"]], ["balance", []]] },
    { y: "default", x: "balance", place: "pl-[23.4px] pt-[22.8px]", scale: S600, xFocus: true, yLine: "on", yScatter: "off", xLine: "off", rows: [["default", ["Y"]], ["balance", ["X"]], ["income", ["Color"]], ["student", []]] },
    { y: "default", x: "income", place: "pl-[19.6px] pt-[34.8px]", scale: S576, xFocus: true, yLine: "on", yScatter: "off", xLine: "on", rows: [["default", ["Y"]], ["income", ["X", "Color"]], ["student", []], ["balance", []]] },
  ],
  [
    null,
    { y: "student", x: "student", place: "pl-[7.5px] pt-[6.7px]", scale: S600, yFocus: true, yLine: "off", yScatter: "off", xLine: "off", rows: [["student", ["Y", "X"]], ["income", ["Color"]], ["default", []], ["balance", []]] },
    { y: "student", x: "balance", place: "pl-[13.5px] pt-[6.7px]", scale: S600, xFocus: true, yLine: "off", yScatter: "off", xLine: "off", rows: [["student", ["Y"]], ["balance", ["X"]], ["income", ["Color"]], ["default", []]] },
    { y: "student", x: "income", place: "pl-[19.6px] pt-[6.8px]", scale: S576, yLine: "off", yScatter: "off", xLine: "on", rows: [["student", ["Y"]], ["income", ["X", "Color"]], ["default", []], ["balance", []]] },
  ],
  [
    null,
    null,
    { y: "balance", x: "balance", place: "pl-[23.6px] pt-[10.7px]", scale: S576, xFocus: true, yLine: "off", yScatter: "on", xLine: "off", rows: [["balance", ["Y", "X"]], ["income", ["Color"]], ["default", []], ["student", []]] },
    { y: "balance", x: "income", place: "pl-[7.5px] pt-[10.7px]", scale: S576, yLine: "off", yScatter: "active", xLine: "on", stats: ["-0.1338", "-0.13777"], trend: true, rows: [["balance", ["Y"]], ["income", ["X", "Color"]], ["default", []], ["student", []]] },
  ],
  [
    null,
    null,
    null,
    { y: "income", x: "income", place: "pl-[19.6px] pt-[14.8px]", scale: S576, yLine: "on", yScatter: "on", xLine: "on", stats: ["1", "1"], rows: [["income", ["Y", "X", "Color"]], ["default", []], ["student", []], ["balance", []]] },
  ],
];

function Panel({ spec }: { spec: PanelSpec }) {
  return (
    <div className={"h-0 w-0 " + spec.place}>
      <div className={"h-[1082px] w-[1226px] origin-top-left rounded-[10px] bg-[#f7f7f7] p-[13px] shadow-[0_0_3px_#f7f7f7] " + spec.scale}>
        <NavBar />
        <HeaderBar />
        <ViewBar />
        <div className="h-[880px] bg-white">
          <Toolbar spec={spec} />
          <div className="flex h-[689px] items-start">
            <Plot spec={spec} />
            <Inspector rows={spec.rows} />
          </div>
          <Footer spec={spec} />
        </div>
      </div>
    </div>
  );
}

const COLUMNS: [string, string][] = [
  ["Default", "pl-[248px] pt-[26px]"],
  ["Student", "pl-[239px] pt-[12px]"],
  ["Balance", "pl-[242px] pt-[13px]"],
  ["Income", "pl-[231px] pt-[26px]"],
];
const ROWS: [string, string][] = [
  ["Default", "pl-[74px] pt-[263px]"],
  ["Student", "pl-[62px] pt-[210px]"],
  ["Balance", "pl-[66px] pt-[208px]"],
  ["Income", "pl-[72px] pt-[212px]"],
];

export default function App() {
  return (
    <div className="grid h-[2588px] w-[3842px] grid-cols-[540px_890px_890px_910px_612px] grid-rows-[260px_610px_590px_590px_538px] overflow-hidden bg-white font-['Liberation_Sans',Arial,sans-serif]">
      <div />
      {COLUMNS.map(([label, place]) => (
        <div key={label} className={"text-[42.5px] leading-[48px] text-black italic " + place}>
          {label}
        </div>
      ))}
      {ROWS.map(([label, place], r) => (
        <React.Fragment key={label}>
          <div className={place}>
            <div className="w-[48px] rotate-180 text-[42.5px] leading-[48px] text-black italic [writing-mode:vertical-rl]">{label}</div>
          </div>
          {[0, 1, 2, 3].map((c) => {
            const spec = PANELS[r][c];
            return <div key={c}>{spec && <Panel spec={spec} />}</div>;
          })}
        </React.Fragment>
      ))}
    </div>
  );
}
